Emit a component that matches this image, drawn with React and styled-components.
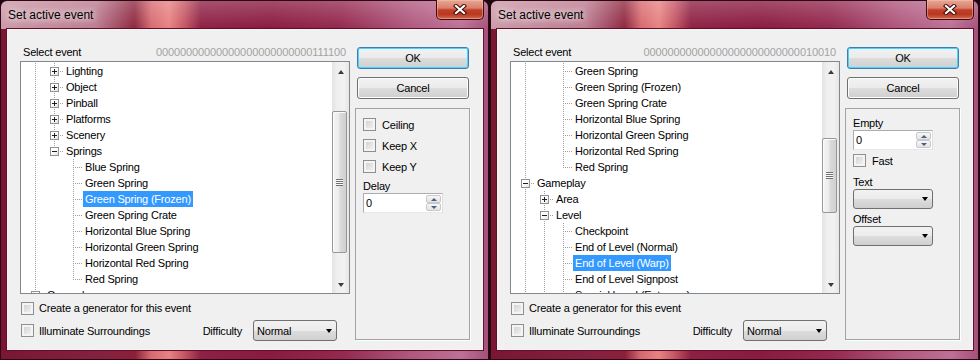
import React from 'react'
import styled, { createGlobalStyle, css } from 'styled-components'

const FONT = '"Liberation Sans", Arial, sans-serif'
const LINE = '#a0a0a0'
const vDots = `repeating-linear-gradient(to bottom, ${LINE} 0 1px, transparent 1px 2px)`
const hDots = `repeating-linear-gradient(to right, transparent 0 1px, ${LINE} 1px 2px)`

const GlobalStyle = createGlobalStyle`
  * { box-sizing: border-box; }
  body { margin: 0; background: #1c0610; font-family: ${FONT}; }
`

const Desktop = styled.div`
  display: flex;
  gap: 1px;
  width: 980px;
  height: 360px;
  overflow: hidden;
  background: #1c0610;
`

const Frame = styled.div`
  flex: none;
  width: 489px;
  height: 360px;
  display: flex;
  flex-direction: column;
  padding: 0 5px 9px 6px;
  border: 1px solid #2c0814;
  border-radius: 7px 7px 0 0;
  background: linear-gradient(
    to right,
    #7a1634 0,
    #862040 100px,
    #8a2038 134px,
    #d86a70 150px,
    #e88282 168px,
    #c45462 184px,
    #8e2044 200px,
    #8a1a40 270px,
    #94284e 340px,
    #b0587e 410px,
    #bd7096 460px,
    #a44e78 489px
  );
`

const TitleBar = styled.div`
  height: 28px;
  margin: 0 -5px 0 -6px;
  padding-left: 7px;
  display: flex;
  align-items: center;
  border-radius: 6px 6px 0 0;
  background:
    linear-gradient(to right, rgba(255, 236, 242, 0.62) 0, rgba(255, 236, 242, 0.45) 95px, rgba(255, 236, 242, 0.05) 132px, transparent 150px),
    linear-gradient(to bottom, rgba(255, 255, 255, 0.22), rgba(255, 255, 255, 0));
`

const Title = styled.span`
  font-size: 12px;
  color: #000;
  text-shadow: 0 0 6px rgba(255, 255, 255, 0.9), 0 0 10px rgba(255, 255, 255, 0.7);
`

const CloseBtn = styled.div`
  margin-left: auto;
  margin-right: 4px;
  align-self: flex-start;
  margin-top: -1px;
  width: 48px;
  height: 20px;
  display: flex;
  align-items: center;
  justify-content: center;
  border: 1px solid #3e0c10;
  border-top: none;
  border-radius: 0 0 5px 5px;
  background: linear-gradient(to bottom, #e9a896 0%, #d8806c 42%, #c2402a 52%, #b8381f 75%, #d46a4e 100%);
  box-shadow: inset 0 0 0 1px rgba(255, 200, 180, 0.45);
`

const Client = styled.div`
  height: 321px;
  display: grid;
  grid-template-columns: 330px 115px;
  column-gap: 5px;
  align-items: start;
  padding-left: 12px;
  background: #f0f0f0;
  border: 1px solid #fbf3f5;
  box-shadow: 0 0 0 1px #5e1028;
  font-size: 11px;
  letter-spacing: -0.2px;
  color: #000;
`

const LeftCol = styled.div`
  display: flex;
  flex-direction: column;
`

const Header = styled.div`
  height: 31px;
  padding: 14px 4px 0 3px;
  display: flex;
  justify-content: space-between;
  line-height: 16px;
`

const Hex = styled.span`
  color: #a3a3a3;
  letter-spacing: -0.1px;
`

const TreeBox = styled.div`
  height: 233px;
  display: flex;
  border: 1px solid #828790;
  background: #fff;
`

const TreeList = styled.div`
  flex: 1;
  overflow: hidden;
  padding: 1px 0 0 5px;
`

const Row = styled.div`
  display: flex;
  height: 16px;
  white-space: nowrap;
`

const Guide = styled.span`
  position: relative;
  flex: none;
  width: 19px;
  height: 16px;
  ${p => p.$line && css`
    &::before {
      content: '';
      position: absolute;
      left: 9px;
      top: 0;
      width: 1px;
      height: 16px;
      background: ${vDots};
    }
  `}
`

const Joint = styled.span`
  position: relative;
  flex: none;
  width: 19px;
  height: 16px;
  &::before {
    content: '';
    position: absolute;
    left: 9px;
    top: 0;
    width: 1px;
    height: ${p => (p.$next ? '16px' : '9px')};
    background: ${vDots};
  }
  &::after {
    content: '';
    position: absolute;
    left: 10px;
    top: 8px;
    width: 9px;
    height: 1px;
    background: ${hDots};
  }
`

const Expander = styled.span`
  position: absolute;
  left: 5px;
  top: 4px;
  width: 9px;
  height: 9px;
  z-index: 1;
  border: 1px solid #919191;
  background: linear-gradient(135deg, #fff 40%, #e4e4e4);
  &::before {
    content: '';
    position: absolute;
    left: 1px;
    top: 3px;
    width: 5px;
    height: 1px;
    background: #1e1e1e;
  }
  ${p => p.$plus && css`
    &::after {
      content: '';
      position: absolute;
      left: 3px;
      top: 1px;
      width: 1px;
      height: 5px;
      background: #1e1e1e;
    }
  `}
`

const Label = styled.span`
  padding: 0 2px;
  line-height: 16px;
  ${p => p.$selected && css`
    background: #3399ff;
    color: #fff;
  `}
`

const ScrollBar = styled.div`
  flex: none;
  width: 17px;
  display: flex;
  flex-direction: column;
  background: linear-gradient(to right, #e3e3e3, #efefef 30%, #f2f2f2 70%, #e6e6e6);
`

const Arrow = styled.div`
  height: 17px;
  flex: none;
  display: flex;
  align-items: center;
  justify-content: center;
  &::after {
    content: '';
    width: 0;
    height: 0;
    border-left: 3.5px solid transparent;
    border-right: 3.5px solid transparent;
    ${p => (p.$down
      ? css`border-top: 4px solid #3c3c3c;`
      : css`border-bottom: 4px solid #3c3c3c; margin-top: 2px;`)}
  }
`

const Track = styled.div`
  flex: 1;
`

const Thumb = styled.div`
  width: 15px;
  margin-top: ${p => p.$top}px;
  height: ${p => p.$h}px;
  display: flex;
  align-items: center;
  justify-content: center;
  border: 1px solid #979797;
  border-radius: 2px;
  background: linear-gradient(to right, #f5f5f5, #ebebeb 45%, #dadada 55%, #d0d0d0);
  box-shadow: inset 1px 1px 0 #fcfcfc;
`

const Gripper = styled.span`
  width: 7px;
  height: 7px;
  background: repeating-linear-gradient(to bottom, #707070 0 1px, #fafafa 1px 2px);
`

const OptRow = styled.div`
  display: flex;
  align-items: center;
  height: ${p => p.$h}px;
  margin-top: ${p => p.$mt || 0}px;
  padding-left: ${p => p.$pl || 0}px;
`

const CheckBox = styled.span`
  flex: none;
  width: 13px;
  height: 13px;
  border: 1px solid #8e8f8f;
  background: linear-gradient(135deg, #cdcdcd 0%, #f7f7f7 100%);
  box-shadow: inset 0 0 0 2px #f4f4f4;
`

const CheckText = styled.span`
  margin-left: ${p => p.$gap || 5}px;
  white-space: nowrap;
`

const Difficulty = styled.div`
  margin-left: auto;
  margin-right: 13px;
  display: flex;
  align-items: center;
  gap: 11px;
`

const Combo = styled.div`
  width: ${p => p.$w}px;
  height: ${p => p.$h}px;
  display: flex;
  align-items: center;
  padding: 0 4px 0 3px;
  border: 1px solid #707070;
  border-radius: 3px;
  background: linear-gradient(to bottom, #f2f2f2 0%, #ebebeb 50%, #dddddd 51%, #cfcfcf 100%);
  &::after {
    content: '';
    margin-left: auto;
    border-left: 3.5px solid transparent;
    border-right: 3.5px solid transparent;
    border-top: 4px solid #000;
  }
`

const RightCol = styled.div`
  display: flex;
  flex-direction: column;
`

const Button = styled.div`
  height: 22px;
  margin: ${p => p.$mt}px 1px 0 2px;
  display: flex;
  align-items: center;
  justify-content: center;
  border: 1px solid #707070;
  border-radius: 3px;
  background: linear-gradient(to bottom, #f2f2f2 0%, #ebebeb 50%, #dddddd 51%, #cfcfcf 100%);
  box-shadow: inset 0 0 0 1px #fcfcfc;
  ${p => p.$default && css`
    border-color: #3c7fb1;
    box-shadow: inset 0 0 0 1px #48d3ff;
  `}
`

const Panel = styled.div`
  height: 232px;
  margin-top: 9px;
  padding: ${p => p.$pt}px 0 0 7px;
  display: flex;
  flex-direction: column;
  align-items: flex-start;
  border: 1px solid #a3a3a3;
  box-shadow: 1px 1px 0 #fff;
`

const FieldLabel = styled.div`
  line-height: ${p => p.$h}px;
  height: ${p => p.$h}px;
  margin-top: ${p => p.$mt || 0}px;
`

const NumBox = styled.div`
  width: 80px;
  height: 20px;
  display: flex;
  align-items: center;
  padding-left: 2px;
  border: 1px solid #abadb3;
  border-right-color: #dbdfe6;
  border-bottom-color: #e3e9ef;
  background: #fff;
`

const Spinner = styled.div`
  margin-left: auto;
  margin-right: 1px;
  width: 15px;
  height: 16px;
  display: flex;
  flex-direction: column;
`

const SpinBtn = styled.span`
  flex: 1;
  display: flex;
  align-items: center;
  justify-content: center;
  border: 1px solid #c9c9c9;
  border-radius: 2px;
  background: linear-gradient(to bottom, #f7f7f7, #e3e3e3);
  &::after {
    content: '';
    border-left: 3px solid transparent;
    border-right: 3px solid transparent;
    ${p => (p.$down
      ? css`border-top: 3px solid #4a5f88;`
      : css`border-bottom: 3px solid #4a5f88;`)}
  }
`

const Numeric = () => (
  <NumBox>
    0
    <Spinner>
      <SpinBtn />
      <SpinBtn $down />
    </Spinner>
  </NumBox>
)

const TreeRow = ({ row }) => (
  <Row>
    {row.guides.map((g, i) => <Guide key={i} $line={g} />)}
    <Joint $next={row.next}>
      {row.exp && <Expander $plus={row.exp === '+'} />}
    </Joint>
    <Label $selected={row.sel}>{row.text}</Label>
  </Row>
)

const springs = [
  'Green Spring',
  'Green Spring (Frozen)',
  'Green Spring Crate',
  'Horizontal Blue Spring',
  'Horizontal Green Spring',
  'Horizontal Red Spring',
]

const leftRows = [
  ...['Lighting', 'Object', 'Pinball', 'Platforms', 'Scenery'].map(text => ({ text, guides: [1], next: 1, exp: '+' })),
  { text: 'Springs', guides: [1], next: 0, exp: '-' },
  ...['Blue Spring', ...springs].map(text => ({ text, guides: [1, 0], next: 1, sel: text === 'Green Spring (Frozen)' })),
  { text: 'Red Spring', guides: [1, 0], next: 0 },
  { text: 'Gameplay', guides: [], next: 1, exp: '-' },
]

const rightRows = [
  ...springs.map(text => ({ text, guides: [1, 0], next: 1 })),
  { text: 'Red Spring', guides: [1, 0], next: 0 },
  { text: 'Gameplay', guides: [], next: 1, exp: '-' },
  { text: 'Area', guides: [1], next: 1, exp: '+' },
  { text: 'Level', guides: [1], next: 1, exp: '-' },
  ...['Checkpoint', 'End of Level (Normal)', 'End of Level (Warp)', 'End of Level Signpost', 'Special Level (Entrance)'].map(text => ({
    text,
    guides: [1, 1],
    next: 1,
    sel: text === 'End of Level (Warp)',
  })),
]

const Dialog = ({ hex, rows, thumb, panelTop, children }) => (
  <Frame>
    <TitleBar>
      <Title>Set active event</Title>
      <CloseBtn>
        <svg width="14" height="11" viewBox="0 0 14 11">
          <path d="M3 2 L11 9 M11 2 L3 9" stroke="#3a0c0c" strokeWidth="4.2" strokeLinecap="square" />
          <path d="M3 2 L11 9 M11 2 L3 9" stroke="#fff" strokeWidth="2.2" strokeLinecap="square" />
        </svg>
      </CloseBtn>
    </TitleBar>
    <Client>
      <LeftCol>
        <Header>
          <span>Select event</span>
          <Hex>{hex}</Hex>
        </Header>
        <TreeBox>
          <TreeList>
            {rows.map(r => <TreeRow key={r.text} row={r} />)}
          </TreeList>
          <ScrollBar>
            <Arrow />
            <Track>
              <Thumb $top={thumb[0]} $h={thumb[1]}>
                <Gripper />
              </Thumb>
            </Track>
            <Arrow $down />
          </ScrollBar>
        </TreeBox>
        <OptRow $h={16} $mt={6} $pl={1}>
          <CheckBox />
          <CheckText>Create a generator for this event</CheckText>
        </OptRow>
        <OptRow $h={21} $mt={4} $pl={1}>
          <CheckBox />
          <CheckText>Illuminate Surroundings</CheckText>
          <Difficulty>
            Difficulty
            <Combo $w={84} $h={21}>Normal</Combo>
          </Difficulty>
        </OptRow>
      </LeftCol>
      <RightCol>
        <Button $mt={17} $default>OK</Button>
        <Button $mt={8}>Cancel</Button>
        <Panel $pt={panelTop}>{children}</Panel>
      </RightCol>
    </Client>
  </Frame>
)

export default function App() {
  return (
    <>
      <GlobalStyle />
      <Desktop>
        <Dialog hex="00000000000000000000000000111100" rows={leftRows} thumb={[32, 142]} panelTop={5}>
          <OptRow $h={21}><CheckBox /><CheckText $gap={6}>Ceiling</CheckText></OptRow>
          <OptRow $h={21}><CheckBox /><CheckText $gap={6}>Keep X</CheckText></OptRow>
          <OptRow $h={21}><CheckBox /><CheckText $gap={6}>Keep Y</CheckText></OptRow>
          <FieldLabel $h={13} $mt={3}>Delay</FieldLabel>
          <Numeric />
        </Dialog>
        <Dialog hex="00000000000000000000000000010010" rows={rightRows} thumb={[59, 75]} panelTop={7}>
          <FieldLabel $h={14}>Empty</FieldLabel>
          <Numeric />
          <OptRow $h={21}><CheckBox /><CheckText $gap={6}>Fast</CheckText></OptRow>
          <FieldLabel $h={13} $mt={5}>Text</FieldLabel>
          <Combo $w={80} $h={20} />
          <FieldLabel $h={14} $mt={3}>Offset</FieldLabel>
          <Combo $w={80} $h={20} />
        </Dialog>
      </Desktop>
    </>
  )
}
